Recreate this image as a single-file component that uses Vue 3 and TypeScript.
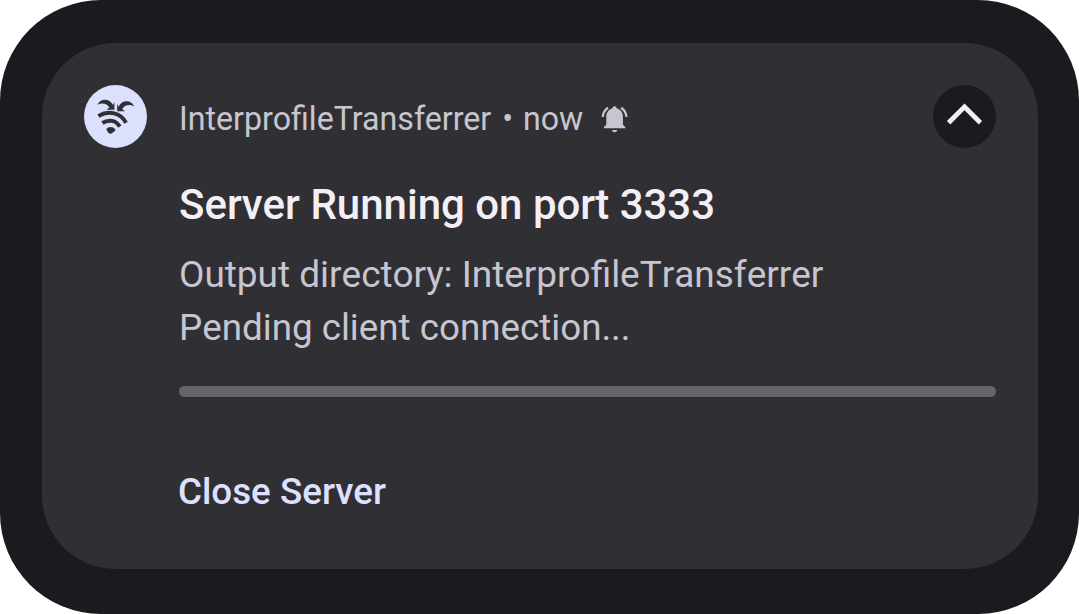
<script setup lang="ts">
import { ref } from 'vue'

interface Notification {
  app: string
  time: string
  title: string
  lines: string[]
  action: string
}

const notification: Notification = {
  app: 'InterprofileTransferrer',
  time: 'now',
  title: 'Server Running on port 3333',
  lines: ['Output directory: InterprofileTransferrer', 'Pending client connection...'],
  action: 'Close Server',
}

const expanded = ref(true)
</script>

<template>
  <main class="shade">
    <article class="card">
      <div class="app-icon">
        <svg viewBox="0 0 63 63" aria-hidden="true">
          <g fill="#303034">
            <path d="M13.4 19.8C16 13.2 25.6 12.8 29 20L30.4 17V24.8H22.4L25.4 22.6C23 18.6 18.4 17.2 13.4 19.8Z" />
            <path d="M50.2 21.4C47.2 14.8 38 14.4 34.6 21.8L33.2 18.4V26.2H40.8L38.2 24C40.6 20 45.4 19 50.2 21.4Z" />
            <path d="M22.4 44.2C24 41.4 28.6 41 31.6 44.6L30.4 46.6L26.6 49L24 47.6Z" />
          </g>
          <g fill="none" stroke="#303034" stroke-width="4">
            <path d="M14.4 31C25 24.8 37 28 42 37.8" />
            <path d="M18.4 38C25 33.8 32 35.4 35.8 41.6" />
          </g>
        </svg>
      </div>

      <div class="content">
        <header class="meta">
          <span>{{ notification.app }}</span>
          <span class="dot">•</span>
          <span>{{ notification.time }}</span>
          <svg class="bell" viewBox="0 0 28 28" aria-hidden="true">
            <path fill="#c7c5d0" d="M14 1.2C15.3 1.2 16 2 16 3.3C20 4.3 22.4 7.7 22.4 11.8V19.8L24.8 22V23.3H3.2V22L5.6 19.8V11.8C5.6 7.7 8 4.3 12 3.3C12 2 12.7 1.2 14 1.2ZM11.2 25H16.8C16.3 26.5 15.4 27.2 14 27.2S11.7 26.5 11.2 25Z" />
            <path fill="none" stroke="#c7c5d0" stroke-width="2.3" d="M7.3 2.7Q2.4 6 2.1 12M20.7 2.7Q25.6 6 25.9 12" />
          </svg>
        </header>
        <h1 class="title">{{ notification.title }}</h1>
        <div v-show="expanded">
          <p v-for="line in notification.lines" :key="line" class="line">{{ line }}</p>
          <div class="progress" role="progressbar"></div>
          <button class="action" type="button">{{ notification.action }}</button>
        </div>
      </div>

      <button class="toggle" type="button" aria-label="Toggle details" @click="expanded = !expanded">
        <svg viewBox="0 0 63 63" aria-hidden="true">
          <path fill="none" stroke="#f3eff6" stroke-width="4.8" d="M15.6 37.8L31.5 21.8L47.4 37.8" />
        </svg>
      </button>
    </article>
  </main>
</template>

<style>
body {
  margin: 0;
  background: #fff;
}
</style>

<style scoped>
.shade {
  box-sizing: border-box;
  width: 1079px;
  height: 614px;
  padding: 43px 41px 45px 42px;
  border-radius: 101px;
  background: #1b1b1f;
  font-family: Roboto, "Noto Sans", sans-serif;
  font-kerning: none;
}

.card {
  box-sizing: border-box;
  display: flex;
  align-items: flex-start;
  height: 526px;
  padding: 42px;
  border-radius: 73.5px;
  background: #303034;
}

.app-icon,
.toggle {
  flex: none;
  width: 63px;
  height: 63px;
  border-radius: 50%;
}

.app-icon {
  margin-right: 32px;
  background: #dbe1fc;
}

.app-icon svg,
.toggle svg {
  display: block;
  width: 63px;
  height: 63px;
}

.toggle {
  padding: 0;
  border: 0;
  background: #1b1b1f;
}

.content {
  flex: none;
  width: 754px;
  color: #c7c5d0;
}

.meta {
  display: flex;
  align-items: center;
  height: 68px;
  font-size: 32.5px;
  font-kerning: normal;
  line-height: 68px;
  white-space: pre;
  transform: scaleX(0.99);
  transform-origin: left center;
}

.dot {
  margin: 0 10px 0 11px;
}

.bell {
  width: 28px;
  height: 28px;
  margin: 0 0 1px 18px;
}

.title {
  height: 50px;
  margin: 27px 0 0;
  color: #f3eff6;
  font-size: 42px;
  font-weight: 500;
  line-height: 50px;
  white-space: pre;
}

.line {
  height: 53px;
  margin: 0;
  font-size: 36.75px;
  line-height: 53px;
  white-space: pre;
}

.line:first-child {
  font-size: 36.95px;
}

.title + div {
  padding-top: 18px;
}

.progress {
  width: 817px;
  height: 11px;
  margin-top: 32px;
  border-radius: 6px;
  background: #666668;
}

.action {
  display: block;
  height: 60px;
  margin: 65px 0 0 -1px;
  padding: 0;
  border: 0;
  background: none;
  color: #dbe1ff;
  font-family: inherit;
  font-size: 36.75px;
  font-weight: 500;
  line-height: 60px;
  white-space: pre;
}
</style>
